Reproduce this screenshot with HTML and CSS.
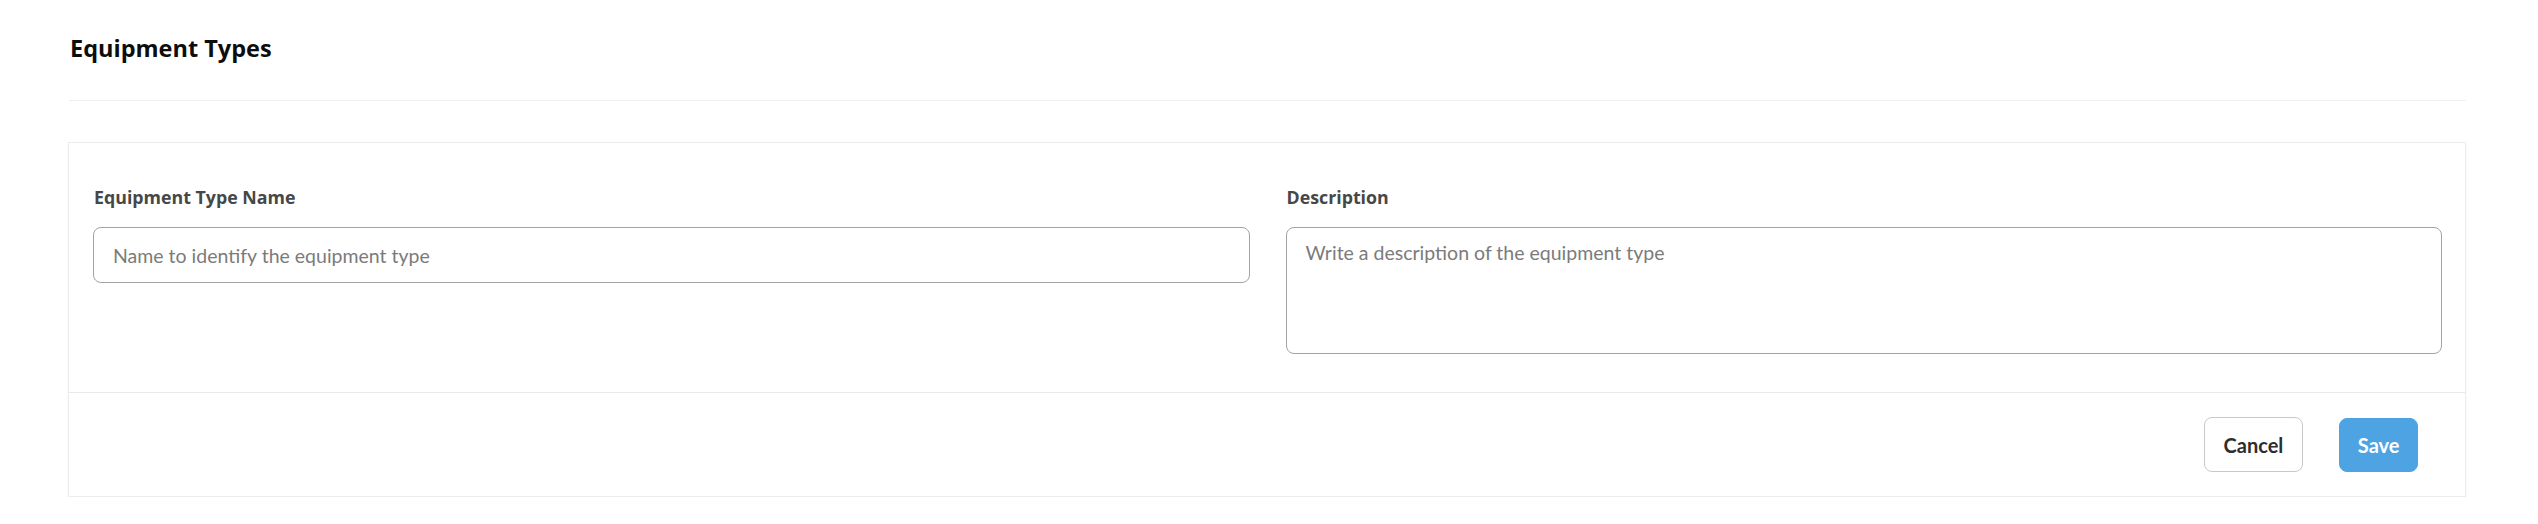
FILE: index.html
```html
<!DOCTYPE html>
<html lang="en">
<head>
<meta charset="utf-8">
<title>Equipment Types</title>
<link rel="stylesheet" href="styles.css">
</head>
<body>
<main class="page">
  <header class="page-header">
    <h1 class="page-title">Equipment Types</h1>
  </header>
  <section class="card">
    <div class="card-body">
      <div class="field">
        <label class="field-label" for="name">Equipment Type Name</label>
        <input class="field-input" id="name" type="text" placeholder="Name to identify the equipment type">
      </div>
      <div class="field">
        <label class="field-label" for="desc">Description</label>
        <textarea class="field-textarea" id="desc" placeholder="Write a description of the equipment type"></textarea>
      </div>
    </div>
    <div class="card-footer">
      <button class="btn btn-cancel" type="button">Cancel</button>
      <button class="btn btn-save" type="button">Save</button>
    </div>
  </section>
</main>
</body>
</html>
```
FILE: styles.css
```css
* { box-sizing: border-box; }

html, body {
  margin: 0;
  background: #ffffff;
}

body {
  font-family: Lato, "Open Sans", "Liberation Sans", sans-serif;
  color: #111;
}

.page {
  padding: 0 72px 0 68px;
}

.page-header {
  padding: 33px 1px 37px;
  border-bottom: 1px solid #f0f0f0;
  margin-left: 1px;
}

.page-title {
  margin: 0;
  font-family: "Open Sans", Lato, sans-serif;
  font-size: 23.5px;
  line-height: 30px;
  font-weight: 700;
  color: #0d0d0d;
}

.card {
  margin-top: 41px;
  border: 1px solid #ececec;
  box-shadow: 0 1px 2px rgba(0, 0, 0, 0.06);
  background: #fff;
}

.card-body {
  display: grid;
  grid-template-columns: 1fr 1fr;
  column-gap: 36px;
  align-items: start;
  padding: 43px 23px 38px 24px;
}

.field {
  display: flex;
  flex-direction: column;
  gap: 19px;
}

.field-label {
  font-family: "Open Sans", Lato, sans-serif;
  font-size: 17.8px;
  line-height: 22px;
  font-weight: 700;
  color: #474747;
  padding-left: 1px;
}

.field-input,
.field-textarea {
  font-family: inherit;
  font-size: 19.5px;
  color: #333;
  border: 1px solid #a3a3a3;
  border-radius: 8px;
  background: #fff;
  outline: none;
  width: 100%;
  margin: 0;
}

.field-input {
  height: 56px;
  padding: 0 19px;
}

.field-textarea {
  height: 127px;
  padding: 13px 19px;
  line-height: 24px;
  resize: none;
}

.field-input::placeholder,
.field-textarea::placeholder {
  color: #7b7b7b;
  opacity: 1;
}

.card-footer {
  display: flex;
  justify-content: flex-end;
  align-items: center;
  gap: 36px;
  border-top: 1px solid #e9e9e9;
  height: 104px;
  padding: 0 47px 0 24px;
}

.btn {
  font-family: inherit;
  font-size: 20px;
  font-weight: 700;
  height: 55px;
  padding: 0 19px;
  border-radius: 8px;
  cursor: pointer;
}

.btn-cancel {
  background: #fff;
  color: #2e2e2e;
  border: 1px solid #c9c9c9;
}

.btn-save {
  background: #4ea4e3;
  color: #fff;
  border: 1px solid #4ea4e3;
  height: 54px;
  padding: 0 17.5px;
}
```
